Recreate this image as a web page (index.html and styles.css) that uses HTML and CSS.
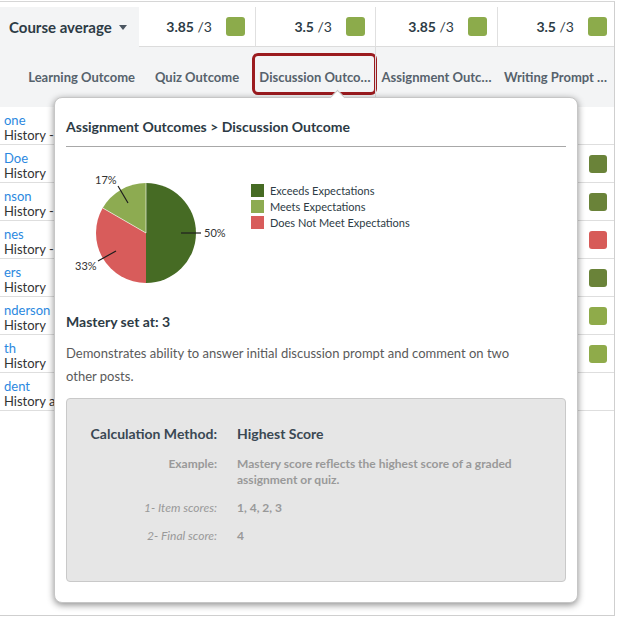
FILE: index.html
```html
<!DOCTYPE html>
<html>
<head>
<meta charset="utf-8">
<link rel="stylesheet" href="styles.css">
</head>
<body>
<div class="frame">
  <div class="hdr1">
    <div class="avg">Course average <span class="caret"></span></div>
    <div class="score"><span><b>3.85</b> /3</span><span class="hsq"></span></div>
    <div class="score"><span><b>3.5</b> /3</span><span class="hsq"></span></div>
    <div class="score"><span><b>3.85</b> /3</span><span class="hsq"></span></div>
    <div class="score"><span><b>3.5</b> /3</span><span class="hsq"></span></div>
  </div>
  <div class="hdr2">
    <div class="lbl first">Learning Outcome</div>
    <div class="lbl">Quiz Outcome</div>
    <div class="lbl focus">Discussion Outco…</div>
    <div class="lbl sep">Assignment Outc…</div>
    <div class="lbl">Writing Prompt …</div>
  </div>
  <div class="rows">
    <div class="row"><div class="name"><a>one</a><span>History -</span></div><div></div><div></div><div></div><div class="sq-cell"></div></div>
    <div class="row"><div class="name"><a>Doe</a><span>History</span></div><div></div><div></div><div></div><div class="sq-cell"><span class="sq dark"></span></div></div>
    <div class="row"><div class="name"><a>nson</a><span>History -</span></div><div></div><div></div><div></div><div class="sq-cell"><span class="sq dark"></span></div></div>
    <div class="row"><div class="name"><a>nes</a><span>History -</span></div><div></div><div></div><div></div><div class="sq-cell"><span class="sq red"></span></div></div>
    <div class="row"><div class="name"><a>ers</a><span>History</span></div><div></div><div></div><div></div><div class="sq-cell"><span class="sq dark"></span></div></div>
    <div class="row"><div class="name"><a>nderson</a><span>History</span></div><div></div><div></div><div></div><div class="sq-cell"><span class="sq light"></span></div></div>
    <div class="row"><div class="name"><a>th</a><span>History</span></div><div></div><div></div><div></div><div class="sq-cell"><span class="sq light"></span></div></div>
    <div class="row"><div class="name"><a>dent</a><span>History a</span></div><div></div><div></div><div></div><div class="sq-cell"></div></div>
  </div>

  <div class="pop">
    <span class="pop-caret"></span>
    <div class="pop-title">Assignment Outcomes &gt; Discussion Outcome</div>
    <div class="chart">
      <svg class="pie" width="185" height="130" viewBox="0 0 185 130">
        <path d="M80,68 L80,18 A50,50 0 0 1 80,118 Z" fill="#466b24"/>
        <path d="M80,68 L80,118 A50,50 0 0 1 36.7,43 Z" fill="#d85c5b"/>
        <path d="M80,68 L36.7,43 A50,50 0 0 1 80,18 Z" fill="#8dab51"/>
        <line x1="80" y1="68" x2="80" y2="18" stroke="#fff" stroke-width="0.6"/>
        <line x1="80" y1="68" x2="36.7" y2="43" stroke="#fff" stroke-width="0.6"/>
        <line x1="115" y1="68" x2="135" y2="68" stroke="#1e1e1e" stroke-width="1.2"/>
        <line x1="32" y1="96" x2="50" y2="86" stroke="#1e1e1e" stroke-width="1.2"/>
        <line x1="52" y1="21" x2="62" y2="38" stroke="#1e1e1e" stroke-width="1.2"/>
        <text x="138" y="72" class="pl">50%</text>
        <text x="9" y="105" class="pl">33%</text>
        <text x="29" y="19" class="pl">17%</text>
      </svg>
      <div class="legend">
        <div class="li"><span class="lsq dark2"></span>Exceeds Expectations</div>
        <div class="li"><span class="lsq light2"></span>Meets Expectations</div>
        <div class="li"><span class="lsq red2"></span>Does Not Meet Expectations</div>
      </div>
    </div>
    <div class="mastery">Mastery set at: 3</div>
    <div class="desc">Demonstrates ability to answer initial discussion prompt and comment on two other posts.</div>
    <div class="calc">
      <div class="ck main">Calculation Method:</div>
      <div class="cv main">Highest Score</div>
      <div class="ck">Example:</div>
      <div class="cv">Mastery score reflects the highest score of a graded assignment or quiz.</div>
      <div class="ck it">1- Item scores:</div>
      <div class="cv">1, 4, 2, 3</div>
      <div class="ck it">2- Final score:</div>
      <div class="cv">4</div>
    </div>
  </div>
</div>
</body>
</html>
```

FILE: styles.css
```css
* { box-sizing: border-box; }

body {
  margin: 0;
  background: #fff;
  font-family: "Lato", "Open Sans", sans-serif;
  color: #2d3b45;
}

.frame {
  position: relative;
  width: 615px;
  height: 615px;
  margin-top: 1px;
  padding-top: 5px;
  border-top: 1px solid #d6d6d6;
  border-right: 1px solid #cfcfcf;
  border-bottom: 1px solid #cfcfcf;
  overflow: hidden;
}

.hdr1, .hdr2, .row {
  display: grid;
  grid-template-columns: 139px 116px 120px 122px 117px;
}

.hdr1 { height: 40px; }

.avg {
  background: #f3f4f5;
  display: flex;
  align-items: center;
  gap: 7px;
  padding-left: 9px;
  font-size: 15px;
  font-weight: 700;
  white-space: nowrap;
}

.caret {
  width: 0;
  height: 0;
  border-left: 4.5px solid transparent;
  border-right: 4.5px solid transparent;
  border-top: 5px solid #4a5560;
}

.score {
  display: flex;
  align-items: center;
  justify-content: flex-end;
  gap: 14px;
  padding-right: 10px;
  border-bottom: 1px solid #dcdcdc;
  font-size: 14px;
  white-space: nowrap;
}

.score + .score { border-left: 1px solid #e0e0e0; }
.score:last-child { padding-right: 7px; }

.hsq {
  width: 19px;
  height: 19px;
  border-radius: 3px;
  background: #8cab4b;
}

.hdr2 {
  height: 60px;
  background: #f3f4f5;
}

.lbl {
  position: relative;
  display: flex;
  align-items: center;
  justify-content: center;
  padding: 0 4px;
  font-size: 13px;
  font-weight: 700;
  color: #56626c;
  white-space: nowrap;
}

.lbl.first { justify-content: flex-end; }

.lbl.focus::after {
  content: "";
  position: absolute;
  left: -3px;
  right: -2px;
  top: 6px;
  height: 36px;
  border: 3px solid #9b1b1f;
  border-radius: 6px;
}

.lbl.sep { border-left: 1px solid #dcdcdc; }

.row {
  height: 38px;
  border-bottom: 1px solid #dedede;
}

.name {
  border-right: 1px solid #cfcfcf;
  padding: 6px 0 0 4px;
  white-space: nowrap;
  font-size: 13px;
  line-height: 15px;
}

.name a { display: block; color: #2b88e0; }
.name span { display: block; color: #333; }

.sq-cell {
  display: flex;
  align-items: center;
  justify-content: flex-end;
  padding-right: 7px;
}

.sq {
  width: 18px;
  height: 18px;
  border-radius: 3px;
}

.sq.dark { background: #6a8339; }
.sq.red { background: #d75b58; }
.sq.light { background: #8fab4a; }

/* popover */
.pop {
  position: absolute;
  left: 54px;
  top: 95px;
  width: 524px;
  height: 506px;
  background: #fff;
  border: 1px solid #c6c6c6;
  border-radius: 8px;
  box-shadow: 0 2px 7px rgba(0, 0, 0, 0.45);
  padding: 0 11px;
}

.pop-caret {
  position: absolute;
  left: 277px;
  top: -6.5px;
  width: 11px;
  height: 11px;
  background: #fff;
  border-top: 1px solid #c6c6c6;
  border-left: 1px solid #c6c6c6;
  transform: rotate(45deg);
}

.pop-title {
  font-size: 14px;
  font-weight: 700;
  line-height: 20px;
  padding: 19px 0 9px;
  border-bottom: 1px solid #a8a8a8;
}

.chart {
  display: flex;
  margin-top: 18px;
}

.pie { display: block; flex: none; }

.pl {
  font-family: "Lato", "Open Sans", sans-serif;
  font-size: 11px;
  fill: #333;
}

.legend {
  padding-top: 17px;
  font-size: 11px;
  color: #2d3b45;
}

.li {
  display: flex;
  align-items: center;
  gap: 6px;
  height: 16px;
}

.lsq {
  width: 13px;
  height: 13px;
}

.dark2 { background: #466b24; }
.light2 { background: #8dab51; }
.red2 { background: #d85c5b; }

.mastery {
  margin-top: 17px;
  font-size: 14px;
  font-weight: 700;
  line-height: 20px;
}

.desc {
  margin-top: 10px;
  max-width: 472px;
  font-size: 13px;
  line-height: 23px;
  color: #5a5a5a;
}

.calc {
  margin-top: 10px;
  height: 184px;
  background: #e6e6e6;
  border: 1px solid #c9c9c9;
  border-radius: 4px;
  padding: 25px 0 0 16px;
  display: grid;
  grid-template-columns: 134px 290px;
  column-gap: 20px;
  row-gap: 12px;
  align-content: start;
  font-size: 12px;
  line-height: 16px;
  color: #999;
}

.ck { text-align: right; font-weight: 700; white-space: nowrap; }
.cv { font-weight: 700; }
.ck.it { font-style: italic; font-weight: 400; }

.ck.main, .cv.main {
  font-size: 14px;
  line-height: 20px;
  color: #3a4853;
}
```
